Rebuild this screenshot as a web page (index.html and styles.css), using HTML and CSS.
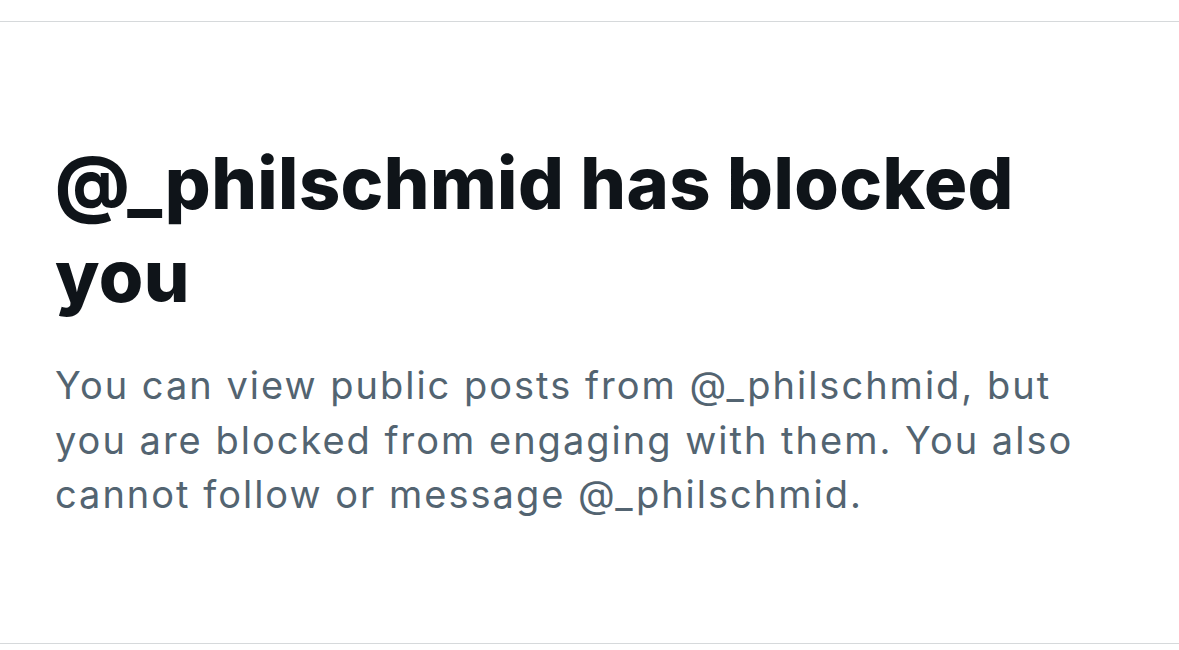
FILE: index.html
```html
<!DOCTYPE html>
<html lang="en">
<head>
<meta charset="utf-8">
<title>Blocked</title>
<link rel="stylesheet" href="styles.css">
</head>
<body>
<div class="top-gap"></div>
<main class="panel">
  <div class="message">
    <h1 class="title">@_philschmid has blocked you</h1>
    <p class="desc">You can view public posts from @_philschmid, but you are blocked from engaging with them. You also cannot follow or message @_philschmid.</p>
  </div>
</main>
</body>
</html>
```

FILE: styles.css
```css
html, body {
  margin: 0;
  padding: 0;
  background: #ffffff;
}
body {
  width: 1179px;
  height: 650px;
  overflow: hidden;
}
.top-gap {
  height: 21px;
}
.panel {
  height: 623px;
  box-sizing: border-box;
  border-top: 1px solid #d6d9db;
  border-bottom: 1px solid #d6d9db;
  display: flex;
  flex-direction: column;
}
.message {
  padding: 114px 100px 0 55px;
  display: flex;
  flex-direction: column;
}
.title {
  margin: 0;
  font-family: Inter, "Liberation Sans", sans-serif;
  font-weight: 800;
  font-size: 72px;
  line-height: 93px;
  letter-spacing: 0.4px;
  color: #0f1419;
}
.desc {
  margin: 36px 0 0 0;
  font-family: Inter, "Liberation Sans", sans-serif;
  font-weight: 400;
  font-size: 38px;
  line-height: 54.5px;
  letter-spacing: 2px;
  color: #536471;
}
```
